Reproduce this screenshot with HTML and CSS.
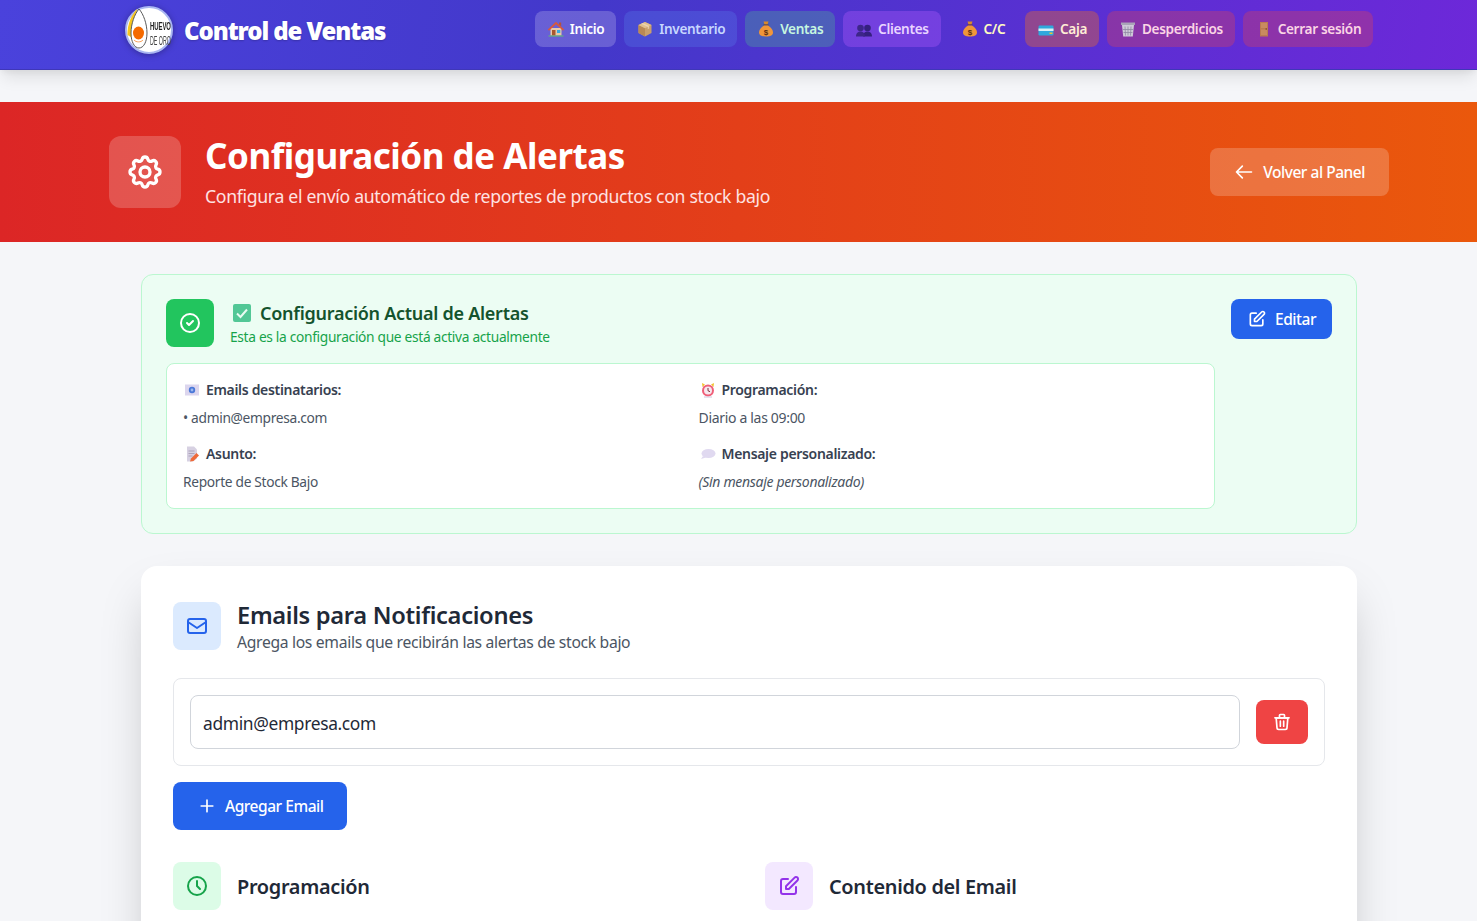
FILE: index.html
```html
<!DOCTYPE html>
<html lang="es">
<head>
<meta charset="utf-8">
<title>Configuración de Alertas</title>
<link rel="stylesheet" href="styles.css">
</head>
<body>
<nav class="nav">
  <div class="nav-inner">
    <div class="brand">
      <svg class="logo" viewBox="0 0 48 48" aria-hidden="true">
        <circle cx="24" cy="24" r="23" fill="#fff" stroke="#a9b6f2" stroke-width="2"/>
        <path d="M2.500 29C2 18 7 8 12 3L7.500 32Z" fill="#f7c61e"/>
        <path d="M14 3C9.500 8 6 18 6 27C6 36 9.500 42 14 42C18.500 42 22 36 22 27C22 18 18.500 8 14 3Z" fill="#fff" stroke="#5a5a5a" stroke-width="1"/>
        <ellipse cx="13.500" cy="27" rx="5.500" ry="6.500" fill="#f56a00"/>
        <path d="M9 34c2 2.500 7 2.500 9 0" fill="none" stroke="#f7a15a" stroke-width="1"/>
        <text class="logo-a" transform="translate(25 24) scale(.536 1)">HUEVO</text>
        <text class="logo-b" transform="translate(25 39) scale(.425 1)">DE ORO</text>
      </svg>
      <span class="brand-name">Control de Ventas</span>
    </div>
    <div class="links">
      <a class="link l-home"><svg class="emo" viewBox="0 0 18 18"><path d="M3.500 8h11v7.500h-11z" fill="#e9c9a8"/><path d="M.8 9.500L9 1.800l8.200 7.700-1.200 1.200L9 4.200 2 10.700z" fill="#d9583b"/><path d="M12 2.500h2.200v4l-2.200-2z" fill="#b5533a"/><path d="M5 10h3.500v5.500H5z" fill="#a8572f"/><path d="M10 10h3.300v3H10z" fill="#39a9e0"/><path d="M1.500 15.500h15v1h-15z" fill="#5cc46c"/></svg>Inicio</a>
      <a class="link l-inv"><svg class="emo" viewBox="0 0 18 18"><path d="M9 2l6.500 3v8L9 16.500 2.500 13V5z" fill="#c99f6c"/><path d="M2.500 5L9 8.200V16.500L2.500 13z" fill="#b98855"/><path d="M9 2l6.500 3L9 8.200 2.500 5z" fill="#e1bf8e"/><path d="M5.200 3.700l6.500 3.100v2.400l1.500-.7V6.100L6.700 3z" fill="#f0dcc0" opacity=".7"/></svg>Inventario</a>
      <a class="link l-sales"><svg class="emo" viewBox="0 0 18 18"><path d="M6.500 1.500h5l-1 3h-3z" fill="#d98a2b"/><path d="M6.500 4.500h5v1h-5z" fill="#6b3d16"/><path d="M7 5.500h4c3 1.800 5 4.500 5 7 0 2.800-2.500 4-7 4s-7-1.200-7-4c0-2.500 2-5.200 5-7z" fill="#f0963a"/><text x="9" y="14.500" class="bag-s">$</text></svg>Ventas</a>
      <a class="link l-cli"><svg class="emo" viewBox="0 0 18 18"><circle cx="12.500" cy="8" r="3.300" fill="#35207f"/><path d="M8 16.500c0-3.500 2-5 4.500-5S17 13 17 16.500z" fill="#35207f"/><circle cx="5.500" cy="8" r="3.300" fill="#3d2689"/><path d="M1 16.500c0-3.500 2-5 4.500-5S10 13 10 16.500z" fill="#3d2689"/></svg>Clientes</a>
      <a class="link l-cc"><svg class="emo" viewBox="0 0 18 18"><path d="M6.500 1.500h5l-1 3h-3z" fill="#d98a2b"/><path d="M6.500 4.500h5v1h-5z" fill="#6b3d16"/><path d="M7 5.500h4c3 1.800 5 4.500 5 7 0 2.800-2.500 4-7 4s-7-1.200-7-4c0-2.500 2-5.200 5-7z" fill="#f0963a"/><text x="9" y="14.500" class="bag-s">$</text></svg>C/C</a>
      <a class="link l-box"><svg class="emo" viewBox="0 0 18 18"><rect x="1.500" y="5.500" width="15" height="10" rx="1.200" fill="#2fa8dc"/><path d="M1.500 8.500h15v2.500h-15z" fill="#d9f0f7"/><path d="M12.500 12.500h3v1.500h-3z" fill="#f2c230"/></svg>Caja</a>
      <a class="link l-red"><svg class="emo" viewBox="0 0 18 18"><path d="M2 2.500h14v2.500H2z" fill="#a9a3b8"/><path d="M3 5h12l-1.200 11.500H4.200z" fill="#cfcad9"/><path d="M6 6.500l.5 9M9 6.500v9M12 6.500l-.5 9M4 9.500h10M4.500 12.500h9" stroke="#8f89a3" stroke-width=".8"/></svg>Desperdicios</a>
      <a class="link l-red"><svg class="emo" viewBox="0 0 18 18"><path d="M5 2h8v14.500H5z" fill="#bb7a50"/><path d="M6 3h6v5H6zM6 9.500h6v5.500H6z" fill="#c98a5f"/><circle cx="11.200" cy="9" r=".7" fill="#6b3d16"/></svg>Cerrar sesión</a>
    </div>
  </div>
</nav>

<header class="hero">
  <div class="hero-inner">
    <div class="hero-left">
      <div class="hero-icon">
        <svg class="i40" viewBox="0 0 24 24" fill="none" stroke="currentColor" stroke-width="2" stroke-linecap="round" stroke-linejoin="round"><path d="M10.325 4.317c.426-1.756 2.924-1.756 3.35 0a1.724 1.724 0 0 0 2.573 1.066c1.543-.94 3.31.826 2.37 2.37a1.724 1.724 0 0 0 1.065 2.572c1.756.426 1.756 2.924 0 3.35a1.724 1.724 0 0 0-1.066 2.573c.94 1.543-.826 3.31-2.37 2.37a1.724 1.724 0 0 0-2.572 1.065c-.426 1.756-2.924 1.756-3.35 0a1.724 1.724 0 0 0-2.573-1.066c-1.543.94-3.31-.826-2.37-2.37a1.724 1.724 0 0 0-1.065-2.572c-1.756-.426-1.756-2.924 0-3.35a1.724 1.724 0 0 0 1.066-2.573c-.94-1.543.826-3.31 2.37-2.37.996.608 2.296.07 2.572-1.065z"/><circle cx="12" cy="12" r="3"/></svg>
      </div>
      <div>
        <h1 class="hero-title">Configuración de Alertas</h1>
        <p class="hero-sub">Configura el envío automático de reportes de productos con stock bajo</p>
      </div>
    </div>
    <a class="back btn-text">
      <svg class="i20" viewBox="0 0 24 24" fill="none" stroke="currentColor" stroke-width="2" stroke-linecap="round" stroke-linejoin="round"><path d="M10 19l-7-7 7-7M3 12h18"/></svg>
      Volver al Panel
    </a>
  </div>
</header>

<main class="main">
  <section class="current">
    <div class="current-top">
      <div class="current-head">
        <div class="ic48 ic-green-solid">
          <svg class="i24" viewBox="0 0 24 24" fill="none" stroke="currentColor" stroke-width="2" stroke-linecap="round" stroke-linejoin="round"><path d="M9 12l2 2 4-4"/><circle cx="12" cy="12" r="9"/></svg>
        </div>
        <div>
          <h2 class="current-title"><svg class="emo-big" viewBox="0 0 18 18"><rect width="18" height="18" rx="2" fill="#52c796"/><path d="M4 9.500l3.500 3.500L14 5.500" fill="none" stroke="#e9fbf2" stroke-width="2"/></svg>Configuración Actual de Alertas</h2>
          <p class="current-sub">Esta es la configuración que está activa actualmente</p>
        </div>
      </div>
      <a class="edit btn-text">
        <svg class="i20" viewBox="0 0 24 24" fill="none" stroke="currentColor" stroke-width="2" stroke-linecap="round" stroke-linejoin="round"><path d="M11 5H6a2 2 0 0 0-2 2v11a2 2 0 0 0 2 2h11a2 2 0 0 0 2-2v-5"/><path d="M17.586 3.586a2 2 0 1 1 2.828 2.828L11.828 15H9v-2.828z"/></svg>
        Editar
      </a>
    </div>
    <div class="summary">
      <div>
        <h3 class="sum-label"><svg class="emo-s" viewBox="0 0 18 18"><rect x="2" y="3.500" width="14" height="11" fill="#dcd6ee"/><circle cx="9" cy="9" r="3.200" fill="#4a78d8"/><circle cx="9" cy="9" r="1.400" fill="#9db8ee"/></svg>Emails destinatarios:</h3>
        <p class="sum-val sum-narrow">• admin@empresa.com</p>
      </div>
      <div>
        <h3 class="sum-label"><svg class="emo-s" viewBox="0 0 18 18"><path d="M3 2l3 1.500-2.500 2.500zM15 2l-3 1.500 2.500 2.500z" fill="#f2c230"/><circle cx="9" cy="9.500" r="6" fill="#ef5f78"/><circle cx="9" cy="9.500" r="4" fill="#f6e8ee"/><path d="M9 7v2.700l2 1" stroke="#7a2c3a" stroke-width="1" fill="none"/><path d="M5 15.500h8v1H5z" fill="#cfc4dc"/></svg>Programación:</h3>
        <p class="sum-val">Diario a las 09:00</p>
      </div>
      <div>
        <h3 class="sum-label"><svg class="emo-s" viewBox="0 0 18 18"><path d="M4 1.500h7l3 3v9L10 16.500H4z" fill="#d7d1e2"/><path d="M5.500 6h6M5.500 8.500h6M5.500 11h4" stroke="#a79fb8" stroke-width=".9"/><path d="M7 16.500l1-3L13.500 8l2.500 2.500-5.500 5.500z" fill="#ee6a3a"/></svg>Asunto:</h3>
        <p class="sum-val sum-narrow">Reporte de Stock Bajo</p>
      </div>
      <div>
        <h3 class="sum-label"><svg class="emo-s" viewBox="0 0 18 18"><ellipse cx="9.500" cy="8.500" rx="7" ry="4.500" fill="#e0d9f0"/><path d="M4 11l-2 3 5-1.500z" fill="#e0d9f0"/></svg>Mensaje personalizado:</h3>
        <p class="sum-val sum-it">(Sin mensaje personalizado)</p>
      </div>
    </div>
  </section>

  <section class="card">
    <div class="sec-head">
      <div class="ic48 ic-blue">
        <svg class="i24" viewBox="0 0 24 24" fill="none" stroke="currentColor" stroke-width="2" stroke-linecap="round" stroke-linejoin="round"><rect x="3" y="5" width="18" height="14" rx="2"/><path d="M3 8l9 6 9-6"/></svg>
      </div>
      <div>
        <h2 class="sec-title">Emails para Notificaciones</h2>
        <p class="sec-sub">Agrega los emails que recibirán las alertas de stock bajo</p>
      </div>
    </div>
    <div class="email-row">
      <input class="email-input" type="email" value="admin@empresa.com">
      <button class="del" type="button" aria-label="Eliminar">
        <svg class="i20" viewBox="0 0 24 24" fill="none" stroke="currentColor" stroke-width="2" stroke-linecap="round" stroke-linejoin="round"><path d="M5 7h14l-1 12a2 2 0 0 1-2 2H8a2 2 0 0 1-2-2z"/><path d="M3.500 7h17M9 7V4a1 1 0 0 1 1-1h4a1 1 0 0 1 1 1v3M10 11v6M14 11v6"/></svg>
      </button>
    </div>
    <a class="add btn-text">
      <svg class="i20" viewBox="0 0 24 24" fill="none" stroke="currentColor" stroke-width="2" stroke-linecap="round"><path d="M12 5v14M5 12h14"/></svg>
      Agregar Email
    </a>
    <div class="two">
      <div class="sec-head-b">
        <div class="ic48 ic-green">
          <svg class="i24" viewBox="0 0 24 24" fill="none" stroke="currentColor" stroke-width="2" stroke-linecap="round" stroke-linejoin="round"><circle cx="12" cy="12" r="9"/><path d="M12 7v5l3 3"/></svg>
        </div>
        <h2 class="sec-title-b">Programación</h2>
      </div>
      <div class="sec-head-b">
        <div class="ic48 ic-purple">
          <svg class="i24" viewBox="0 0 24 24" fill="none" stroke="currentColor" stroke-width="2" stroke-linecap="round" stroke-linejoin="round"><path d="M11 5H6a2 2 0 0 0-2 2v11a2 2 0 0 0 2 2h11a2 2 0 0 0 2-2v-5"/><path d="M17.586 3.586a2 2 0 1 1 2.828 2.828L11.828 15H9v-2.828z"/></svg>
        </div>
        <h2 class="sec-title-b">Contenido del Email</h2>
      </div>
    </div>
  </section>
</main>
</body>
</html>
```
FILE: styles.css
```css
* { box-sizing: border-box; }
html, body { margin: 0; height: 921px; overflow: hidden; }
body {
  background: #f5f6f9;
  font-family: "Noto Sans", "Open Sans", sans-serif;
  letter-spacing: -.02em;
  color: #1f2937;
}
h1, h2, h3, p { margin: 0; }

.nav {
  height: 70px;
  background-image: linear-gradient(100deg, #4a42dc 0%, #4338ca 40%, #6d28d9 100%);
  border-bottom: 1px solid #3f37b8;
  box-shadow: 0 10px 15px -3px rgba(0,0,0,.1), 0 4px 6px -2px rgba(0,0,0,.05);
}
.nav-inner { display: flex; align-items: flex-start; padding: 6px 0 0 125px; }
.brand { display: flex; align-items: center; gap: 11px; width: 410px; height: 48px; }
.logo { width: 48px; height: 48px; flex: none; filter: drop-shadow(0 1px 3px rgba(0,0,0,.3)); }
.logo-a { font: 700 11px "Liberation Sans", sans-serif; fill: #222; letter-spacing: 0; }
.logo-b { font: 400 12.500px "Liberation Sans", sans-serif; fill: #444; letter-spacing: 0; }
.brand-name { font-size: 24px; font-weight: 900; color: #fff; letter-spacing: -1.1px; text-shadow: 0 1px 2px rgba(0,0,0,.2); }
.links { display: flex; gap: 8px; margin-top: 5px; }
.link {
  display: flex; align-items: center;
  height: 36px; padding: 0 12px 1px; border-radius: 8px;
  font-size: 13.600px; font-weight: 600; white-space: nowrap;
}
.emo { width: 18px; height: 18px; margin: 1px 4.750px 0 0; flex: none; }
.bag-s { font: 700 8px "Liberation Sans", sans-serif; fill: #5b2e10; text-anchor: middle; letter-spacing: 0; }
.l-home { background: rgba(255,255,255,.2); color: #fff; }
.l-inv { background: rgba(96,165,250,.2); color: #c7d7fe; }
.l-sales { background: rgba(74,222,128,.25); color: #c6f6e0; }
.l-cli { background: rgba(168,85,247,.4); color: #e9d5ff; }
.l-cc { color: #fef9c3; }
.l-box { background: rgba(249,115,22,.35); color: #ffedd5; }
.l-red { background: rgba(239,68,68,.3); color: #fbd5e5; }

.hero {
  margin-top: 32px; height: 140px;
  background: linear-gradient(90deg, #dc2626, #ea580c);
  color: #fff;
}
.hero-inner { width: 1280px; height: 140px; margin-left: 109px; display: flex; align-items: center; justify-content: space-between; }
.hero-left { display: flex; align-items: center; gap: 24px; }
.hero-icon {
  width: 72px; height: 72px; border-radius: 12px;
  background: rgba(255,255,255,.2);
  display: flex; align-items: center; justify-content: center;
}
.i40 { width: 40px; height: 40px; }
.i24 { width: 24px; height: 24px; }
.i20 { width: 20px; height: 20px; flex: none; }
.hero-title { font-size: 35px; letter-spacing: -.47px; font-weight: 700; line-height: 40px; padding-top: 1px; }
.hero-sub { margin-top: 6px; font-size: 17.650px; line-height: 28px; color: #fee2e2; }
.btn-text { font-size: 15.500px; font-weight: 500; letter-spacing: -.03em; }
.back {
  display: flex; align-items: center; gap: 9px;
  height: 48px; padding: 0 24px;
  background: rgba(255,255,255,.2); border-radius: 8px;
}

.main { width: 1216px; margin: 32px 0 0 141px; }
.current {
  height: 260px; padding: 24px;
  background: #ecfdf3;
  border: 1px solid #bbf7d0; border-radius: 12px;
}
.current-top { display: flex; justify-content: space-between; align-items: flex-start; }
.current-head { display: flex; gap: 16px; }
.ic48 { width: 48px; height: 48px; flex: none; border-radius: 8px; display: flex; align-items: center; justify-content: center; }
.ic-green-solid { background: #22c55e; color: #fff; }
.ic-blue { background: #dbeafe; color: #2563eb; }
.ic-green { background: #dcfce7; color: #16a34a; }
.ic-purple { background: #f3e8ff; color: #9333ea; }
.current-title { display: flex; align-items: center; font-size: 18px; letter-spacing: -.015em; line-height: 28px; font-weight: 600; color: #14532d; }
.emo-big { width: 18px; height: 18px; margin: 0 9px 0 3px; flex: none; }
.current-sub { font-size: 13.750px; line-height: 20px; color: #16a34a; }
.edit {
  display: flex; align-items: center; gap: 8px;
  height: 40px; padding: 0 16px; border-radius: 8px;
  background: #2563eb; color: #fff;
}
.summary {
  width: 1049px; height: 146px; margin-top: 16px; padding: 16px;
  display: grid; grid-template-columns: 1fr 1fr; column-gap: 16px; row-gap: 16px;
  background: #fff; border: 1px solid #bbf7d0; border-radius: 8px;
}
.sum-label { display: flex; align-items: center; font-size: 14px; line-height: 20px; font-weight: 600; color: #374151; }
.emo-s { width: 18px; height: 18px; margin-right: 5px; flex: none; }
.sum-val { margin-top: 8px; font-size: 14px; line-height: 20px; color: #4b5563; }
.sum-narrow { font-size: 13.750px; }
.sum-it { font-style: italic; }

.card {
  height: 500px; margin-top: 32px; padding: 36px 32px 32px;
  background: #fff; border-radius: 16px;
  box-shadow: 0 25px 50px -12px rgba(0,0,0,.25);
}
.sec-head { display: flex; align-items: flex-start; gap: 16px; }
.sec-title { font-size: 23.700px; line-height: 26px; font-weight: 600; color: #1f2937; }
.sec-sub { margin-top: 2px; font-size: 15.700px; line-height: 24px; color: #4b5563; }
.email-row {
  margin-top: 24px; padding: 16px; height: 88px;
  display: flex; align-items: center; gap: 16px;
  border: 1px solid #e5e7eb; border-radius: 8px;
}
.email-input {
  flex: 1; height: 54px; padding: 1px 12px 0;
  border: 1px solid #d1d5db; border-radius: 8px;
  font: 400 17.400px "Noto Sans", sans-serif; letter-spacing: -.02em; color: #1f2937; background: #fff;
}
.del {
  width: 52px; height: 44px; border: 0; border-radius: 8px;
  background: #ef4444; color: #fff; padding: 0;
  display: flex; align-items: center; justify-content: center;
}
.add {
  display: flex; width: max-content; align-items: center; gap: 8px;
  height: 48px; padding: 0 24px; margin-top: 16px;
  border-radius: 8px; background: #2563eb; color: #fff;
}
.two { display: grid; grid-template-columns: 560px 560px; column-gap: 32px; margin-top: 32px; }
.sec-head-b { display: flex; align-items: center; gap: 16px; }
.sec-title-b { font-size: 19.900px; line-height: 28px; padding-top: 2px; font-weight: 600; color: #1f2937; }
```
